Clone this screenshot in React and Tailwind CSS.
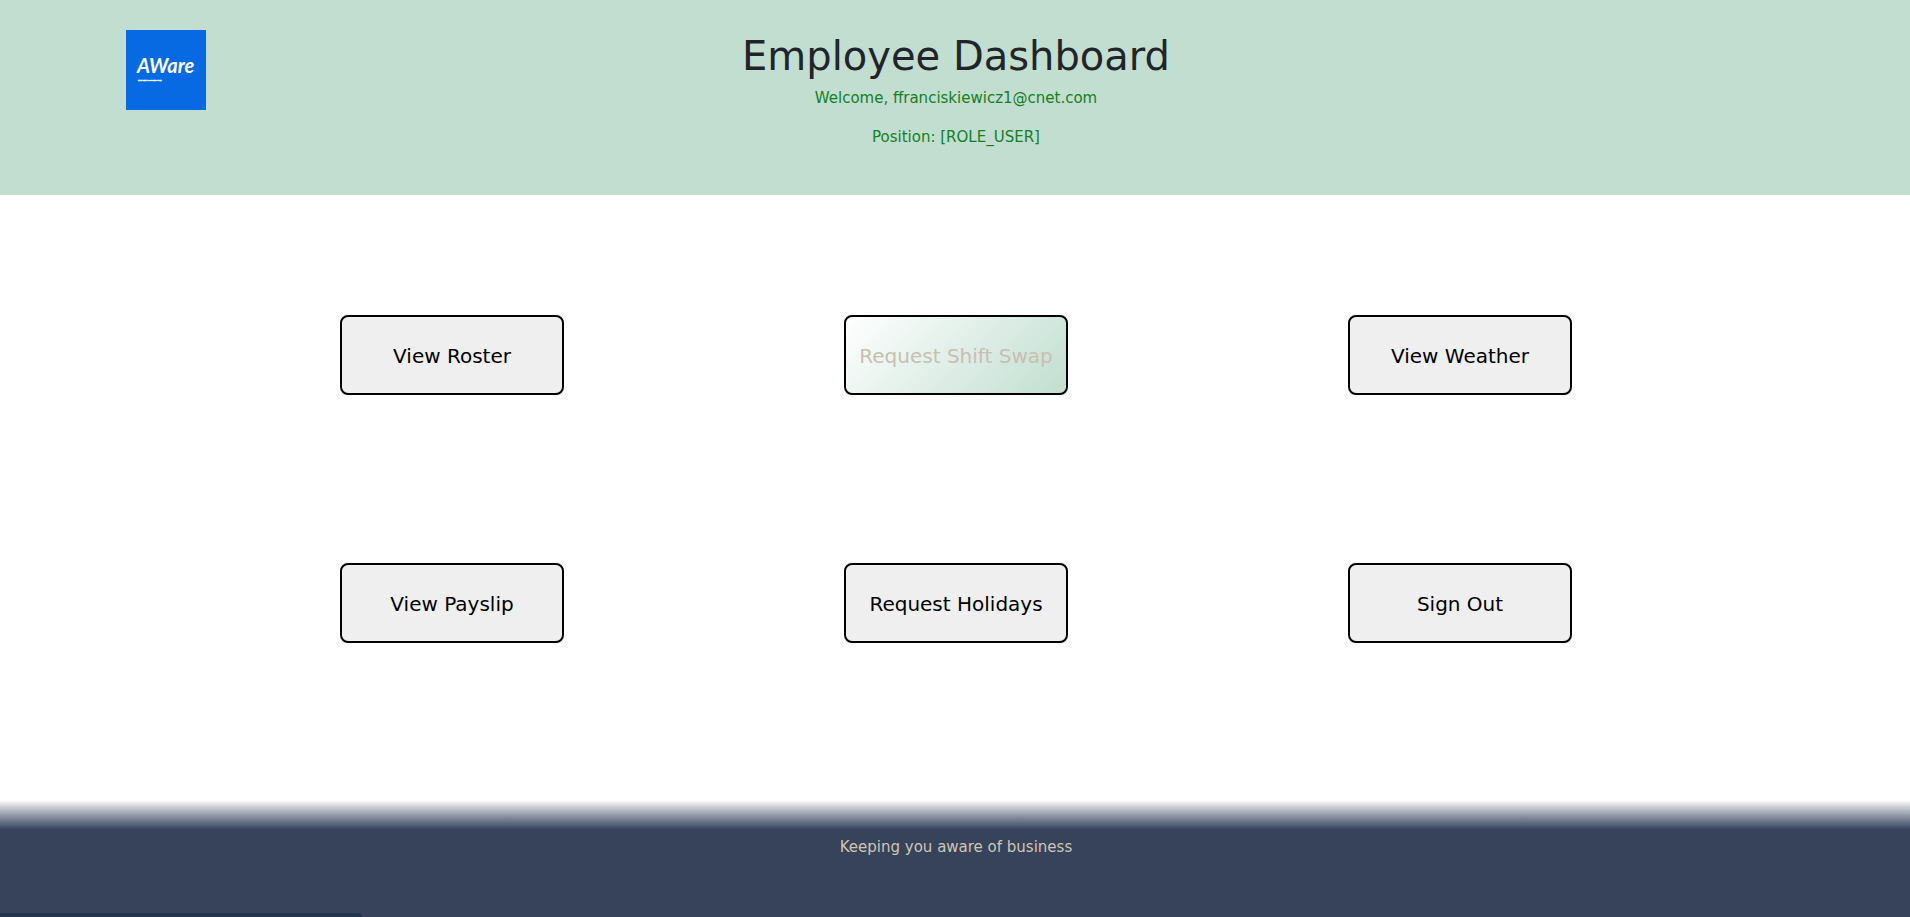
const actions = [
  { label: "View Roster" },
  { label: "Request Shift Swap", active: true },
  { label: "View Weather" },
  { label: "View Payslip" },
  { label: "Request Holidays" },
  { label: "Sign Out" },
];

function Logo() {
  return (
    <svg viewBox="0 0 80 80" className="size-20" role="img" aria-label="AWare">
      <rect width="80" height="80" fill="#076ae2" />
      <text x="11" y="43" fill="#fff" fontFamily="Lato, sans-serif" fontSize="20" fontWeight="700" fontStyle="italic">
        AWare
      </text>
      <text x="12" y="51" fill="#fff" stroke="#fff" strokeWidth="0.3" fontFamily="Lato, sans-serif" fontSize="2.6" fontWeight="900">
        EXPERT SCHEDULE
      </text>
    </svg>
  );
}

function ActionButton({ label, active }) {
  const look = active
    ? "bg-linear-[135deg] from-white to-[#c1ded0] text-[#c8bfb0]"
    : "bg-[#efefef] text-black";
  return (
    <button type="button" className={`h-20 w-56 rounded-lg border-2 border-black pt-0.5 text-xl whitespace-nowrap ${look}`}>
      {label}
    </button>
  );
}

export default function App() {
  return (
    <div className="flex min-h-screen flex-col bg-white font-['Verdana','DejaVu_Sans',sans-serif] text-[15px]">
      <header className="grid h-[195px] grid-cols-[1fr_auto_1fr] bg-[#c1ded0] pt-[30px] pl-0.5">
        <div className="pl-[124px]">
          <Logo />
        </div>
        <div className="text-center text-[#15801f]">
          <h1 className="text-[40px] leading-[52px] text-[#212529]">Employee Dashboard</h1>
          <p className="mt-1 leading-6">Welcome, ffranciskiewicz1@cnet.com</p>
          <p className="mt-[15px] leading-6">Position: [ROLE_USER]</p>
        </div>
      </header>
      <main className="grid grow grid-cols-[repeat(3,minmax(auto,504px))] content-start justify-center justify-items-center gap-y-[168px] pt-[120px] pl-0.5">
        {actions.map((action) => (
          <ActionButton key={action.label} {...action} />
        ))}
      </main>
      <footer className="relative text-center text-[#cfc6b4]">
        <div className="h-[30px] bg-linear-to-b from-white to-[#37425b]" />
        <p className="h-[87px] bg-[#37425b] pt-[5px] pl-0.5 leading-6">Keeping you aware of business</p>
        <div className="absolute bottom-0 left-0 h-1 w-[362px] rounded-tr-sm bg-[#24354d]" />
      </footer>
    </div>
  );
}
